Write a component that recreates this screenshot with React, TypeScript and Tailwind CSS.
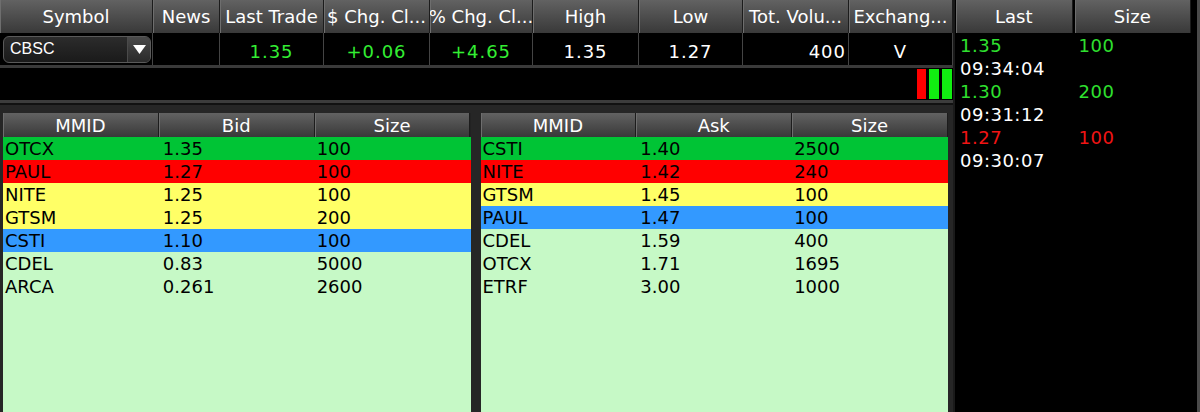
import { Fragment } from 'react'

type Quote = { mm: string; px: string; size: string; bg: string }

const bids: Quote[] = [
  { mm: 'OTCX', px: '1.35', size: '100', bg: 'bg-[#00c435]' },
  { mm: 'PAUL', px: '1.27', size: '100', bg: 'bg-[#ff0000]' },
  { mm: 'NITE', px: '1.25', size: '100', bg: 'bg-[#ffff66]' },
  { mm: 'GTSM', px: '1.25', size: '200', bg: 'bg-[#ffff66]' },
  { mm: 'CSTI', px: '1.10', size: '100', bg: 'bg-[#3399ff]' },
  { mm: 'CDEL', px: '0.83', size: '5000', bg: 'bg-[#c6f9c6]' },
  { mm: 'ARCA', px: '0.261', size: '2600', bg: 'bg-[#c6f9c6]' },
]

const asks: Quote[] = [
  { mm: 'CSTI', px: '1.40', size: '2500', bg: 'bg-[#00c435]' },
  { mm: 'NITE', px: '1.42', size: '240', bg: 'bg-[#ff0000]' },
  { mm: 'GTSM', px: '1.45', size: '100', bg: 'bg-[#ffff66]' },
  { mm: 'PAUL', px: '1.47', size: '100', bg: 'bg-[#3399ff]' },
  { mm: 'CDEL', px: '1.59', size: '400', bg: 'bg-[#c6f9c6]' },
  { mm: 'OTCX', px: '1.71', size: '1695', bg: 'bg-[#c6f9c6]' },
  { mm: 'ETRF', px: '3.00', size: '1000', bg: 'bg-[#c6f9c6]' },
]

const trades = [
  { px: '1.35', size: '100', time: '09:34:04', color: 'text-[#2fe02f]' },
  { px: '1.30', size: '200', time: '09:31:12', color: 'text-[#2fe02f]' },
  { px: '1.27', size: '100', time: '09:30:07', color: 'text-[#f01414]' },
]

const head =
  'h-full flex items-center justify-center text-white bg-gradient-to-b from-[#626262] to-[#393939] border-r border-[#1c1c1c] shadow-[inset_1px_0_0_#6e6e6e] whitespace-nowrap overflow-hidden'

function Book({ title, rows }: { title: string; rows: Quote[] }) {
  return (
    <div className="flex-1 flex flex-col bg-[#c6f9c6]">
      <div className="grid grid-cols-3 h-[24px] bg-[#222]">
        <div className={head}>MMID</div>
        <div className={head}>{title}</div>
        <div className={head}>Size</div>
      </div>
      {rows.map((r, i) => (
        <div key={i} className={`grid grid-cols-3 h-[23px] leading-[23px] text-black ${r.bg}`}>
          <div className="pl-[2px]">{r.mm}</div>
          <div className="pl-[4px]">{r.px}</div>
          <div className="pl-[2px]">{r.size}</div>
        </div>
      ))}
    </div>
  )
}

export default function App() {
  const cols = ['w-[153px]', 'w-[67px]', 'w-[104px]', 'w-[106px]', 'w-[103px]', 'w-[106px]', 'w-[104px]', 'w-[106px]', 'w-[104px]']
  const titles = ['Symbol', 'News', 'Last Trade', '$ Chg. Cl...', '% Chg. Cl...', 'High', 'Low', 'Tot. Volu...', 'Exchang...']

  return (
    <div className="w-[1200px] h-[412px] bg-black overflow-hidden flex text-[18px] font-['DejaVu_Sans',sans-serif]">
      <div className="w-[953px] flex flex-col">
        {/* quote header */}
        <div className="flex h-[33px]">
          {titles.map((t, i) => (
            <div key={t} className={`${cols[i]} ${head}`}>{t}</div>
          ))}
        </div>
        <div className="flex h-[35px] border-b-[3px] border-[#3a3a3a]">
          <div className={`${cols[0]} border-r border-[#444] flex items-center pl-[3px]`}>
            <div className="w-[148px] h-[27px] rounded-[6px] border border-[#5a5a5a] bg-gradient-to-b from-[#2c2c2c] to-[#1a1a1a] flex overflow-hidden">
              <div className="flex-1 flex items-center pl-[6px] text-white text-[16px] font-['Liberation_Sans',sans-serif]">CBSC</div>
              <div className="w-[23px] border-l border-[#4a4a4a] bg-gradient-to-b from-[#4a4a4a] to-[#2a2a2a] flex items-center justify-center">
                <svg width="13" height="9" viewBox="0 0 13 9"><path d="M0 0h13L6.5 9z" fill="#fff" /></svg>
              </div>
            </div>
          </div>
          {[
            { v: '', c: '' },
            { v: '1.35', c: 'text-[#33ee33] justify-center' },
            { v: '+0.06', c: 'text-[#33ee33] justify-center' },
            { v: '+4.65', c: 'text-[#33ee33] justify-center' },
            { v: '1.35', c: 'text-white justify-center' },
            { v: '1.27', c: 'text-white justify-center' },
            { v: '400', c: 'text-white justify-end pr-[2px]' },
            { v: 'V', c: 'text-white justify-center' },
          ].map((d, i) => (
            <div key={i} className={`${cols[i + 1]} border-r border-[#444] flex items-center pt-[5px] tracking-[1px] ${d.c}`}>
              {d.v}
            </div>
          ))}
        </div>
        {/* tick bars */}
        <div className="h-[35px] flex justify-end items-center gap-[3px] pr-[1px] border-b-[3px] border-[#3c3c3c]">
          <div className="w-[9px] h-[30px] bg-[#ff0000]" />
          <div className="w-[10px] h-[30px] bg-[#11ee11]" />
          <div className="w-[10px] h-[30px] bg-[#11ee11]" />
        </div>
        {/* level II */}
        <div className="flex-1 flex gap-[10px] bg-[#262626] pl-[3px] pr-[5px] pt-[8px] border-t-[2px] border-[#111]">
          <Book title="Bid" rows={bids} />
          <Book title="Ask" rows={asks} />
        </div>
      </div>
      <div className="w-[2px] bg-[#1a1a1a]" />
      {/* time & sales */}
      <div className="w-[242px] flex flex-col pl-[1px] pr-[6px]">
        <div className="grid grid-cols-2 h-[33px] gap-[2px]">
          <div className={head}>Last</div>
          <div className={head}>Size</div>
        </div>
        <div className="pl-[4px] pt-[1px] leading-[23px] tracking-[0.5px]">
          {trades.map((t, i) => (
            <Fragment key={i}>
              <div className={`grid grid-cols-2 ${t.color}`}>
                <span>{t.px}</span>
                <span className="pl-[3px]">{t.size}</span>
              </div>
              <div className="text-white">{t.time}</div>
            </Fragment>
          ))}
        </div>
      </div>
      <div className="w-[3px] bg-[#4a4a4a]" />
    </div>
  )
}
